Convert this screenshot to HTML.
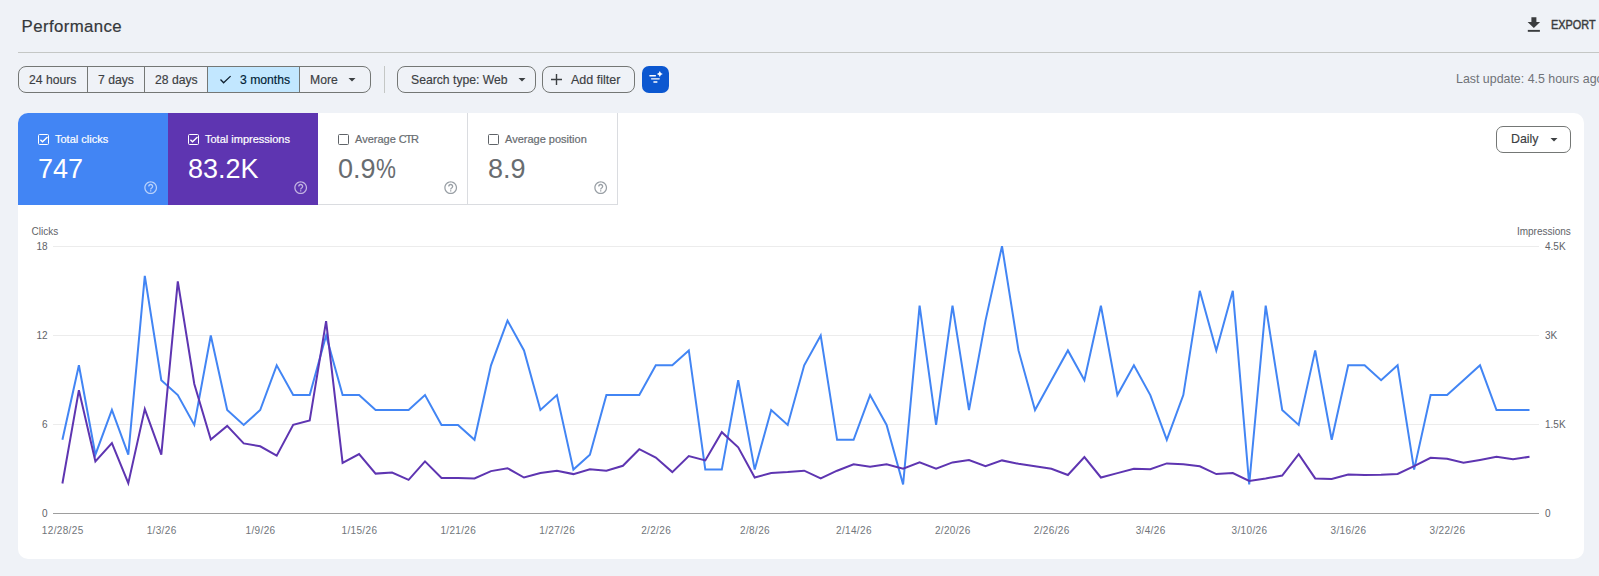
<!DOCTYPE html>
<html><head><meta charset="utf-8">
<style>
*{box-sizing:border-box;margin:0;padding:0}
html,body{width:1599px;height:576px;overflow:hidden;background:#eff2f7;font-family:"Liberation Sans",sans-serif;color:#3c4043}
.abs{position:absolute}
#title{left:21.6px;top:16.9px;font-size:16.8px;letter-spacing:0.4px;color:#35383b;white-space:nowrap;-webkit-text-stroke:0.2px #35383b}
#divider{left:18px;top:52px;width:1581px;height:1px;background:#c4c7c5}
#export{left:1527px;top:15px;height:20px}
#exportTxt{left:1551px;top:18px;font-size:12.5px;font-weight:normal;color:#3a3c3e;-webkit-text-stroke:0.45px #3a3c3e;transform:scaleX(0.87);transform-origin:0 0}
.seg{top:66px;height:27px;border:1px solid #747775;font-size:12.2px;color:#3c4043;white-space:nowrap;line-height:26px;-webkit-text-stroke:0.15px currentColor}
#updated{left:1456px;top:72px;font-size:12.4px;color:#6f7378;white-space:nowrap}
#card{left:18px;top:113px;width:1566px;height:446px;background:#fff;border-radius:10px;overflow:hidden}
.metric{top:0;height:92px;width:150px}
.mlabel{position:absolute;left:37px;top:20px;font-size:11px;white-space:nowrap;-webkit-text-stroke:0.2px currentColor}
.mval{position:absolute;left:20px;top:40.7px;font-size:27px;white-space:nowrap}
.cb{position:absolute;left:20px;top:21px;width:11px;height:11px;border-radius:1.5px}
.help{position:absolute;left:124.8px;top:66.5px;width:15.4px;height:15.4px}
svg text{font-family:"Liberation Sans",sans-serif}
</style></head><body>
<div class="abs" id="title">Performance</div>
<div class="abs" id="divider"></div>
<svg class="abs" id="export" style="left:1527px;top:14px" width="15" height="18" viewBox="0 0 15 18"><path d="M4.4 2.2h5v4.8h3.7l-6.25 6.1-6.25-6.1h3.8z" fill="#3a3c3e"/><rect x="0.8" y="14.9" width="12.1" height="1.9" fill="#3a3c3e"/></svg>
<div class="abs" id="exportTxt">EXPORT</div>

<!-- segmented buttons -->
<div class="abs seg" style="left:18px;width:70px;border-radius:8px 0 0 8px;padding-left:10px">24 hours</div>
<div class="abs seg" style="left:87px;width:58px;border-left:1px solid #747775;padding-left:10px">7 days</div>
<div class="abs seg" style="left:144px;width:64px;padding-left:10px">28 days</div>
<div class="abs seg" style="left:207px;width:93px;background:#c2e7ff;color:#001d35;padding-left:32px">3 months</div>
<svg class="abs" style="left:219px;top:74px" width="13" height="11" viewBox="0 0 13 11"><path d="M1.5 5.5L4.6 8.8L11.6 2.1" stroke="#10202f" stroke-width="1.3" fill="none"/></svg>
<div class="abs seg" style="left:299px;width:72px;border-radius:0 8px 8px 0;padding-left:10px">More</div>
<svg class="abs" style="left:348px;top:77px" width="8" height="5" viewBox="0 0 8 5"><path d="M0.5 1h7l-3.5 3.5z" fill="#3c4043"/></svg>
<div class="abs" style="left:384px;top:66px;width:1px;height:27px;background:#c4c7c5"></div>
<div class="abs seg" style="left:397px;width:139px;border-radius:8px;padding-left:13px">Search type: Web</div>
<svg class="abs" style="left:518px;top:77px" width="8" height="5" viewBox="0 0 8 5"><path d="M0.5 1h7l-3.5 3.5z" fill="#3c4043"/></svg>
<div class="abs seg" style="left:542px;width:93px;border-radius:8px;padding-left:28px;font-size:12.5px">Add filter</div>
<svg class="abs" style="left:550px;top:73px" width="13" height="13" viewBox="0 0 13 13"><path d="M6.5 1v11M1 6.5h11" stroke="#3c4043" stroke-width="1.4"/></svg>
<div class="abs" style="left:642px;top:66px;width:27px;height:27px;background:#0b57d0;border-radius:7px"></div>
<svg class="abs" style="left:642px;top:66px" width="27" height="27" viewBox="0 0 27 27"><path d="M7.9 9.7h5.5M9.6 12.8h7.6M11.9 16h3" stroke="#fff" stroke-width="1.35" stroke-linecap="round"/><path d="M17.8 5.1Q18.4 7.5 20.8 8.1Q18.4 8.7 17.8 11.1Q17.2 8.7 14.8 8.1Q17.2 7.5 17.8 5.1z" fill="#fff"/></svg>
<div class="abs" id="updated">Last update: 4.5 hours ago</div>

<div class="abs" id="card">
  <div class="abs metric" style="left:0;background:#4285f4;color:#fff">
    <div class="cb" style="border:1.5px solid #fff"><svg width="8" height="8" viewBox="0 0 8 8" style="position:absolute;left:0.5px;top:0.5px;overflow:visible"><path d="M0.4 3.8L2.5 5.7L7.5 0.9" stroke="#fff" stroke-width="1.4" fill="none"/></svg></div>
    <div class="mlabel">Total clicks</div>
    <div class="mval">747</div>
    <svg class="help" viewBox="0 0 24 24"><path d="M11 18h2v-2h-2v2zm1-16C6.48 2 2 6.48 2 12s4.48 10 10 10 10-4.48 10-10S17.52 2 12 2zm0 18c-4.41 0-8-3.59-8-8s3.59-8 8-8 8 3.59 8 8-3.59 8-8 8zm0-14c-2.21 0-4 1.79-4 4h2c0-1.1.9-2 2-2s2 .9 2 2c0 2-3 1.75-3 5h2c0-2.25 3-2.5 3-5 0-2.21-1.79-4-4-4z" fill="rgba(255,255,255,.62)"/></svg>
  </div>
  <div class="abs metric" style="left:150px;background:#5e35b1;color:#fff">
    <div class="cb" style="border:1.5px solid #fff"><svg width="8" height="8" viewBox="0 0 8 8" style="position:absolute;left:0.5px;top:0.5px;overflow:visible"><path d="M0.4 3.8L2.5 5.7L7.5 0.9" stroke="#fff" stroke-width="1.4" fill="none"/></svg></div>
    <div class="mlabel">Total impressions</div>
    <div class="mval">83.2K</div>
    <svg class="help" viewBox="0 0 24 24"><path d="M11 18h2v-2h-2v2zm1-16C6.48 2 2 6.48 2 12s4.48 10 10 10 10-4.48 10-10S17.52 2 12 2zm0 18c-4.41 0-8-3.59-8-8s3.59-8 8-8 8 3.59 8 8-3.59 8-8 8zm0-14c-2.21 0-4 1.79-4 4h2c0-1.1.9-2 2-2s2 .9 2 2c0 2-3 1.75-3 5h2c0-2.25 3-2.5 3-5 0-2.21-1.79-4-4-4z" fill="rgba(255,255,255,.62)"/></svg>
  </div>
  <div class="abs metric" style="left:300px;border-right:1px solid #dadce0;border-bottom:1px solid #dadce0;color:#686c70">
    <div class="cb" style="border:1.2px solid #5f6368"></div>
    <div class="mlabel">Average <span style="letter-spacing:-1.3px">CTR</span></div>
    <div class="mval">0.9<span style="display:inline-block;transform:scaleX(0.83);transform-origin:0 0">%</span></div>
    <svg class="help" viewBox="0 0 24 24"><path d="M11 18h2v-2h-2v2zm1-16C6.48 2 2 6.48 2 12s4.48 10 10 10 10-4.48 10-10S17.52 2 12 2zm0 18c-4.41 0-8-3.59-8-8s3.59-8 8-8 8 3.59 8 8-3.59 8-8 8zm0-14c-2.21 0-4 1.79-4 4h2c0-1.1.9-2 2-2s2 .9 2 2c0 2-3 1.75-3 5h2c0-2.25 3-2.5 3-5 0-2.21-1.79-4-4-4z" fill="#9aa0a6"/></svg>
  </div>
  <div class="abs metric" style="left:450px;border-right:1px solid #dadce0;border-bottom:1px solid #dadce0;color:#686c70">
    <div class="cb" style="border:1.2px solid #5f6368"></div>
    <div class="mlabel">Average position</div>
    <div class="mval">8.9</div>
    <svg class="help" viewBox="0 0 24 24"><path d="M11 18h2v-2h-2v2zm1-16C6.48 2 2 6.48 2 12s4.48 10 10 10 10-4.48 10-10S17.52 2 12 2zm0 18c-4.41 0-8-3.59-8-8s3.59-8 8-8 8 3.59 8 8-3.59 8-8 8zm0-14c-2.21 0-4 1.79-4 4h2c0-1.1.9-2 2-2s2 .9 2 2c0 2-3 1.75-3 5h2c0-2.25 3-2.5 3-5 0-2.21-1.79-4-4-4z" fill="#9aa0a6"/></svg>
  </div>
  <div class="abs" style="left:1478px;top:13px;width:75px;height:27px;border:1px solid #747775;border-radius:7px;font-size:12.4px;line-height:25px;padding-left:14px;color:#3c4043;-webkit-text-stroke:0.15px #3c4043">Daily</div>
  <svg class="abs" style="left:1532px;top:24px" width="8" height="5" viewBox="0 0 8 5"><path d="M0.5 1h7l-3.5 3.5z" fill="#3c4043"/></svg>
</div>

<svg class="abs" style="left:0;top:0" width="1599" height="576">
  <g stroke="#ececec" stroke-width="1">
    <line x1="53" y1="246.5" x2="1539" y2="246.5"/>
    <line x1="53" y1="335.5" x2="1539" y2="335.5"/>
    <line x1="53" y1="424.5" x2="1539" y2="424.5"/>
  </g>
  <line x1="53" y1="513.5" x2="1539" y2="513.5" stroke="#9e9e9e" stroke-width="1"/>
  <g font-size="10" fill="#5f6368">
    <text x="31.5" y="235" font-size="10">Clicks</text>
    <text x="47.5" y="250" text-anchor="end">18</text>
    <text x="47.5" y="339" text-anchor="end">12</text>
    <text x="47.5" y="428" text-anchor="end">6</text>
    <text x="47.5" y="517" text-anchor="end">0</text>
    <text x="1570.8" y="235" text-anchor="end" font-size="10">Impressions</text>
    <text x="1545" y="250">4.5K</text>
    <text x="1545" y="339">3K</text>
    <text x="1545" y="428">1.5K</text>
    <text x="1545" y="517">0</text>
  </g>
  <g font-size="10" fill="#70757a" letter-spacing="0.35"><text x="62.7" y="534.4" text-anchor="middle">12/28/25</text><text x="161.6" y="534.4" text-anchor="middle">1/3/26</text><text x="260.5" y="534.4" text-anchor="middle">1/9/26</text><text x="359.4" y="534.4" text-anchor="middle">1/15/26</text><text x="458.3" y="534.4" text-anchor="middle">1/21/26</text><text x="557.2" y="534.4" text-anchor="middle">1/27/26</text><text x="656.1" y="534.4" text-anchor="middle">2/2/26</text><text x="755.0" y="534.4" text-anchor="middle">2/8/26</text><text x="853.9" y="534.4" text-anchor="middle">2/14/26</text><text x="952.8" y="534.4" text-anchor="middle">2/20/26</text><text x="1051.7" y="534.4" text-anchor="middle">2/26/26</text><text x="1150.6" y="534.4" text-anchor="middle">3/4/26</text><text x="1249.5" y="534.4" text-anchor="middle">3/10/26</text><text x="1348.5" y="534.4" text-anchor="middle">3/16/26</text><text x="1447.4" y="534.4" text-anchor="middle">3/22/26</text></g>
  <polyline points="62.4,439.8 78.9,365.3 95.4,454.7 111.9,410.0 128.3,454.7 144.8,275.9 161.3,380.2 177.8,395.1 194.3,424.9 210.8,335.5 227.2,410.0 243.7,424.9 260.2,410.0 276.7,365.3 293.2,395.1 309.7,395.1 326.1,335.5 342.6,395.1 359.1,395.1 375.6,410.0 392.1,410.0 408.6,410.0 425.0,395.1 441.5,424.9 458.0,424.9 474.5,439.8 491.0,365.3 507.5,320.6 524.0,350.4 540.4,410.0 556.9,395.1 573.4,469.6 589.9,454.7 606.4,395.1 622.9,395.1 639.3,395.1 655.8,365.3 672.3,365.3 688.8,350.4 705.3,469.6 721.8,469.6 738.2,380.2 754.7,469.6 771.2,410.0 787.7,424.9 804.2,365.3 820.7,335.5 837.1,439.8 853.6,439.8 870.1,395.1 886.6,424.9 903.1,484.5 919.6,305.7 936.1,424.9 952.5,305.7 969.0,410.0 985.5,320.6 1002.0,246.1 1018.5,350.4 1035.0,410.0 1051.4,380.2 1067.9,350.4 1084.4,380.2 1100.9,305.7 1117.4,395.1 1133.9,365.3 1150.3,395.1 1166.8,439.8 1183.3,395.1 1199.8,290.8 1216.3,350.4 1232.8,290.8 1249.2,484.5 1265.7,305.7 1282.2,410.0 1298.7,424.9 1315.2,350.4 1331.7,439.8 1348.2,365.3 1364.6,365.3 1381.1,380.2 1397.6,365.3 1414.1,469.6 1430.6,395.1 1447.1,395.1 1463.5,380.2 1480.0,365.3 1496.5,410.0 1513.0,410.0 1529.5,410.0" fill="none" stroke="#4285f4" stroke-width="2" stroke-linejoin="miter"/>
  <polyline points="62.4,483.5 78.9,390.2 95.4,461.4 111.9,443.0 128.3,483.1 144.8,409.1 161.3,454.6 177.8,281.4 194.3,384.0 210.8,439.5 227.2,425.9 243.7,443.4 260.2,446.3 276.7,455.6 293.2,424.9 309.7,420.5 326.1,321.2 342.6,462.9 359.1,454.1 375.6,473.6 392.1,472.6 408.6,479.9 425.0,461.4 441.5,478.0 458.0,478.0 474.5,478.4 491.0,471.1 507.5,468.2 524.0,477.5 540.4,473.1 556.9,470.7 573.4,474.1 589.9,469.2 606.4,470.7 622.9,465.8 639.3,449.2 655.8,457.5 672.3,472.1 688.8,456.0 705.3,460.4 721.8,432.2 738.2,447.3 754.7,477.5 771.2,473.1 787.7,472.1 804.2,470.7 820.7,478.4 837.1,470.7 853.6,464.3 870.1,466.8 886.6,464.3 903.1,468.7 919.6,462.4 936.1,468.7 952.5,462.4 969.0,460.0 985.5,466.3 1002.0,460.4 1018.5,463.8 1035.0,466.3 1051.4,468.7 1067.9,475.0 1084.4,457.0 1100.9,477.5 1117.4,473.1 1133.9,468.7 1150.3,469.2 1166.8,463.4 1183.3,464.3 1199.8,466.3 1216.3,474.1 1232.8,473.1 1249.2,480.9 1265.7,478.4 1282.2,475.5 1298.7,454.1 1315.2,478.4 1331.7,478.9 1348.2,474.5 1364.6,475.0 1381.1,474.7 1397.6,473.9 1414.1,466.2 1430.6,457.8 1447.1,458.8 1463.5,462.7 1480.0,459.9 1496.5,456.8 1513.0,459.3 1529.5,456.8" fill="none" stroke="#5e35b1" stroke-width="2" stroke-linejoin="miter"/>
</svg>
</body></html>
